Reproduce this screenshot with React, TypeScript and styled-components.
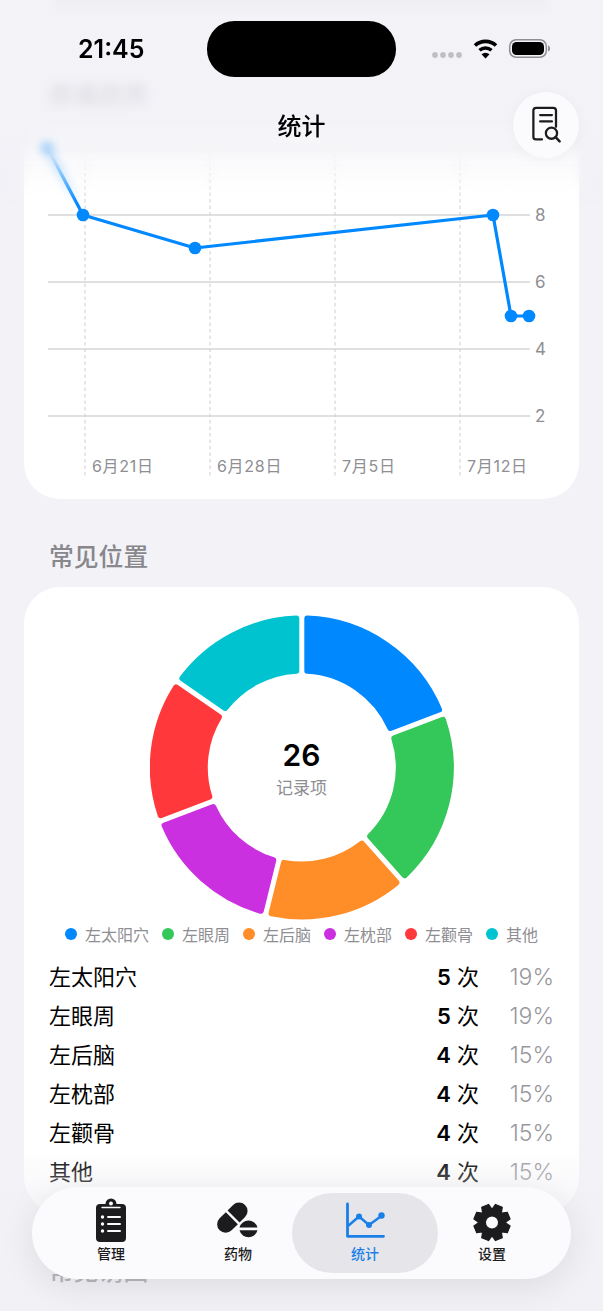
import React from "react";
import styled, { createGlobalStyle } from "styled-components";

const Global = createGlobalStyle`
  html, body { margin: 0; padding: 0; background: #f2f2f7; }
  body { font-family: Inter, "Noto Sans CJK SC", "Liberation Sans", sans-serif; color: #000; }
`;

const Screen = styled.div`
  position: relative;
  width: 603px;
  height: 1311px;
  overflow: hidden;
  background: #f2f2f7;
`;

const Scroll = styled.main`
  display: flex;
  flex-direction: column;
  padding: 0 24px;
`;

const Sliver = styled.div`
  height: 9px;
  margin: 0 31px 69px;
  background: #dcdce0;
`;

const SectionTitle = styled.h2`
  margin: 0 0 13px 25px;
  height: 34px;
  line-height: 34px;
  font-size: 24.8px;
  font-weight: 500;
  color: #87878c;
`;

const Card = styled.section<{ $after?: number }>`
  background: #fff;
  border-radius: 36px;
  margin-bottom: ${(p) => p.$after ?? 41}px;
`;

const ChartSvg = styled.svg`
  display: block;
  width: 555px;
  height: 374px;
`;

const AxisText = styled.text`
  font-family: Inter, "Noto Sans CJK SC", sans-serif;
  font-size: 16px;
  fill: #8e8e93;
  letter-spacing: 0.7px;
`;

const DonutCard = styled(Card)`
  padding-top: 28px;
  height: 626px;
  box-sizing: border-box;
`;

const DonutWrap = styled.div`
  position: relative;
  width: 304px;
  height: 305px;
  margin: 0 auto;
`;

const DonutCenter = styled.div`
  position: absolute;
  inset: 0;
  display: flex;
  flex-direction: column;
  align-items: center;
  justify-content: center;
  padding-top: 2px;
  box-sizing: border-box;
`;

const Total = styled.div`
  font-size: 30px;
  line-height: 36px;
  font-weight: 600;
`;

const TotalLabel = styled.div`
  margin-top: 3px;
  font-size: 17px;
  line-height: 24px;
  color: #8e8e93;
`;

const Legend = styled.div`
  display: flex;
  justify-content: center;
  gap: 13px;
  margin-top: 4px;
  height: 20px;
`;

const LegendItem = styled.div`
  display: flex;
  align-items: center;
  gap: 8px;
  font-size: 16px;
  color: #8e8e93;
  white-space: nowrap;
`;

const Dot = styled.span<{ $color: string }>`
  width: 12px;
  height: 12px;
  border-radius: 50%;
  background: ${(p) => p.$color};
`;

const Rows = styled.div`
  margin-top: 14px;
  padding: 0 25px;
`;

const Row = styled.div`
  display: flex;
  align-items: baseline;
  height: 39px;
  line-height: 39px;
  font-size: 22px;
`;

const RowName = styled.span`
  flex: 1;
`;

const RowCount = styled.span`
  font-weight: 400;
  b {
    font-weight: 600;
  }
`;

const RowShare = styled.span`
  width: 75px;
  text-align: right;
  font-size: 23px;
  color: #98989d;
  font-weight: 300;
`;

const Header = styled.header`
  position: absolute;
  top: 0;
  left: 0;
  right: 0;
  height: 210px;
`;

const HeaderGlass = styled.div`
  position: absolute;
  inset: 0;
  background: linear-gradient(
    rgba(242, 242, 247, 0.82) 0,
    rgba(242, 242, 247, 0.82) 128px,
    rgba(242, 242, 247, 0.6) 150px,
    rgba(242, 242, 247, 0) 205px
  );
  backdrop-filter: blur(5px);
  mask-image: linear-gradient(#000 0, #000 150px, transparent 205px);
`;

const StatusRow = styled.div`
  position: relative;
  display: grid;
  grid-template-columns: 207px 189px 1fr;
  padding-top: 21px;
  height: 55px;
`;

const Clock = styled.div`
  padding-left: 78px;
  font-size: 25px;
  line-height: 56px;
  font-weight: 600;
`;

const Island = styled.div`
  background: #000;
  border-radius: 27.5px;
`;

const StatusIcons = styled.div`
  padding: 17px 0 0 36px;
`;

const NavRow = styled.div`
  position: relative;
  display: grid;
  grid-template-columns: 1fr auto 1fr;
  align-items: center;
  margin-top: 16px;
  padding: 0 24px;
`;

const NavTitle = styled.h1`
  grid-column: 2;
  margin: 4px 0 0;
  font-size: 24px;
  line-height: 32px;
  font-weight: 500;
`;

const RoundButton = styled.button`
  grid-column: 3;
  justify-self: end;
  display: flex;
  align-items: center;
  justify-content: center;
  width: 66px;
  height: 66px;
  padding: 0;
  border: 0;
  border-radius: 50%;
  background: #fbfbfd;
  box-shadow: 0 2px 14px rgba(0, 0, 0, 0.04);
`;

const BottomFade = styled.div`
  position: absolute;
  left: 0;
  right: 0;
  bottom: 0;
  height: 165px;
  background: linear-gradient(rgba(240, 240, 245, 0) 0, rgba(240, 240, 245, 0.45) 50px);
`;

const TabBar = styled.nav`
  position: absolute;
  left: 32px;
  top: 1187px;
  width: 539px;
  height: 92px;
  box-sizing: border-box;
  padding: 0 15.5px;
  display: flex;
  border-radius: 46px;
  background: #fbfbfd;
  box-shadow: 0 8px 36px rgba(0, 0, 0, 0.09);
`;

const Tab = styled.div<{ $active?: boolean }>`
  position: relative;
  width: 127px;
  display: flex;
  flex-direction: column;
  align-items: center;
  padding-top: 11px;
  font-size: 14px;
  line-height: 18px;
  font-weight: 500;
  color: ${(p) => (p.$active ? "#1a80e8" : "#1c1c1e")};
  &::before {
    content: "";
    display: ${(p) => (p.$active ? "block" : "none")};
    position: absolute;
    top: 6px;
    bottom: 6px;
    left: -10px;
    right: -9px;
    border-radius: 40px;
    background: #e6e6ea;
  }
`;

const TabIcon = styled.svg`
  position: relative;
  display: block;
  width: 46px;
  height: 46px;
  margin-bottom: 1px;
`;

const TabLabel = styled.span`
  position: relative;
`;

const BLUE = "#0088ff";

const segments = [
  { name: "左太阳穴", count: 5, share: "19%", color: BLUE },
  { name: "左眼周", count: 5, share: "19%", color: "#34c759" },
  { name: "左后脑", count: 4, share: "15%", color: "#ff8d28" },
  { name: "左枕部", count: 4, share: "15%", color: "#cb30e0" },
  { name: "左颧骨", count: 4, share: "15%", color: "#ff383c" },
  { name: "其他", count: 4, share: "15%", color: "#00c3d0" },
];

// Ring sector path, inset so a round-joined stroke of 2r restores the outline with soft corners.
function sector(a0: number, a1: number, R: number, Ri: number, gap: number, r: number) {
  const ro = R - r;
  const ri = Ri + r;
  const off = gap / 2 + r;
  const dO = Math.asin(off / ro);
  const dI = Math.asin(off / ri);
  const pt = (a: number, p: number) => `${(p * Math.sin(a)).toFixed(2)} ${(-p * Math.cos(a)).toFixed(2)}`;
  return [
    `M${pt(a0 + dO, ro)}`,
    `A${ro} ${ro} 0 0 1 ${pt(a1 - dO, ro)}`,
    `L${pt(a1 - dI, ri)}`,
    `A${ri} ${ri} 0 0 0 ${pt(a0 + dI, ri)}`,
    "Z",
  ].join(" ");
}

function Donut() {
  const total = segments.reduce((s, x) => s + x.count, 0);
  let at = 0;
  return (
    <svg width="304" height="305" viewBox="-151.8 -152.5 304 305" style={{ display: "block" }}>
      {segments.map((s) => {
        const a0 = (at / total) * Math.PI * 2;
        at += s.count;
        const a1 = (at / total) * Math.PI * 2;
        return (
          <path
            key={s.name}
            d={sector(a0, a1, 152, 94, 5, 3)}
            fill={s.color}
            stroke={s.color}
            strokeWidth={6}
            strokeLinejoin="round"
          />
        );
      })}
    </svg>
  );
}

const gridRows = [
  { y: 147.5, label: "" },
  { y: 215, label: "8" },
  { y: 282, label: "6" },
  { y: 349, label: "4" },
  { y: 416, label: "2" },
];
const ticks = [
  { x: 85, label: "6月21日" },
  { x: 210, label: "6月28日" },
  { x: 335, label: "7月5日" },
  { x: 460, label: "7月12日" },
];
const points = [
  [47, 147],
  [83, 215],
  [195, 248],
  [493, 215],
  [511, 316],
  [529, 316],
];

function TrendChart() {
  return (
    <ChartSvg viewBox="24 125 555 374">
      {gridRows.map((g) => (
        <g key={g.y}>
          <line x1="48" x2="530" y1={g.y} y2={g.y} stroke="#d6d6d9" strokeWidth="1.3" />
          {g.label && (
            <AxisText x="535" y={g.y + 6} style={{ fontSize: 17 }}>
              {g.label}
            </AxisText>
          )}
        </g>
      ))}
      {ticks.map((t) => (
        <g key={t.x}>
          <line x1={t.x} x2={t.x} y1="147" y2="476" stroke="#d2d2d6" strokeWidth="1.1" strokeDasharray="3.5 3" />
          <AxisText x={t.x + 7} y="472">
            {t.label}
          </AxisText>
        </g>
      ))}
      <polyline
        points={points.map((p) => p.join(",")).join(" ")}
        fill="none"
        stroke={BLUE}
        strokeWidth="3.2"
        strokeLinejoin="round"
      />
      {points.map((p) => (
        <circle key={p[0]} cx={p[0]} cy={p[1]} r="6.3" fill={BLUE} />
      ))}
    </ChartSvg>
  );
}

function WifiGlyph() {
  return (
    <svg width="118" height="22" viewBox="432 38 118 22" style={{ display: "block" }}>
      {[435, 443, 451, 459].map((x) => (
        <circle key={x} cx={x} cy="55" r="2.9" fill="#c0c0c5" />
      ))}
      <path d="M475 45.5a15.5 15.5 0 0 1 21 0" fill="none" stroke="#000" strokeWidth="3.6" />
      <path d="M479.5 50.3a9 9 0 0 1 12 0" fill="none" stroke="#000" strokeWidth="3.4" />
      <path d="M485.5 58.5l-4-4.2a6 6 0 0 1 8 0z" fill="#000" />
      <rect x="509.7" y="39.7" width="36.6" height="17.6" rx="6.5" fill="none" stroke="#8e8e93" strokeWidth="1.5" />
      <rect x="512" y="42" width="32" height="13" rx="4.6" fill="#000" />
      <path d="M548 45.5c1.6.5 2 1.5 2 3s-.4 2.500-2 3z" fill="#8e8e93" />
    </svg>
  );
}

function RecordSearchIcon() {
  return (
    <svg width="31" height="38" viewBox="0 0 34 42" fill="none" stroke="#1c1c1e" strokeWidth="2.5" strokeLinecap="round">
      <path d="M12 37H5.500a3 3 0 0 1-3-3V5a3 3 0 0 1 3-3h19a3 3 0 0 1 3 3v18" />
      <path d="M10 10h13M10 17h13" />
      <circle cx="22.500" cy="30" r="6.200" />
      <path d="M27 34.500l4.500 4.500" strokeWidth="2.800" />
    </svg>
  );
}

function ClipboardIcon() {
  return (
    <TabIcon viewBox="0 0 46 46">
      <path
        d="M12 6h5.500a5.500 5.500 0 0 1 11 0H34a4 4 0 0 1 4 4v30a4 4 0 0 1-4 4H12a4 4 0 0 1-4-4V10a4 4 0 0 1 4-4z"
        fill="#1c1c1e"
      />
      <circle cx="23" cy="5.500" r="2" fill="#fbfbfd" />
      <path d="M14 9.500h18" stroke="#fbfbfd" strokeWidth="1.400" strokeLinecap="round" />
      {[19, 26, 33].map((y) => (
        <g key={y}>
          <circle cx="14.500" cy={y} r="1.700" fill="#fbfbfd" />
          <rect x="19" y={y - 1.1} width="14" height="2.200" rx="1.100" fill="#fbfbfd" />
        </g>
      ))}
    </TabIcon>
  );
}

function PillsIcon() {
  return (
    <TabIcon viewBox="0 0 46 46">
      <g transform="rotate(-45 17 20)">
        <path d="M8 11.500h8.800v17H8a8.500 8.500 0 0 1 0-17z" fill="#1c1c1e" />
        <path d="M19.200 11.500H27a8.500 8.500 0 0 1 0 17h-7.800z" fill="#1c1c1e" />
      </g>
      <path d="M24.500 29.500a9.300 9.300 0 0 1 18 0z" fill="#1c1c1e" />
      <path d="M24.500 32.300h18a9.300 9.300 0 0 1-18 0z" fill="#1c1c1e" />
    </TabIcon>
  );
}

function TrendIcon() {
  return (
    <TabIcon viewBox="0 0 46 46" fill="none" stroke="#1a80e8">
      <path d="M5.500 6v32.300h36" strokeWidth="2.800" strokeLinecap="round" strokeLinejoin="round" />
      <path d="M6 28L17 18.500 27 27 40 17.500" strokeWidth="2.400" strokeLinejoin="round" />
      <circle cx="17" cy="18.500" r="3" fill="#1a80e8" stroke="none" />
      <circle cx="27" cy="27" r="3" fill="#1a80e8" stroke="none" />
      <circle cx="39.500" cy="17.500" r="3.200" fill="#1a80e8" stroke="none" />
    </TabIcon>
  );
}

// Eight-toothed cog outline with an even-odd hole in the middle.
function cogPath(cx: number, cy: number) {
  const outer = 18.4;
  const root = 13.8;
  const pts: string[] = [];
  for (let i = 0; i < 8; i++) {
    const c = ((i * 45 + 22.5) * Math.PI) / 180;
    const seq: [number, number][] = [
      [root, c - 0.36],
      [outer, c - 0.2],
      [outer, c + 0.2],
      [root, c + 0.36],
    ];
    seq.forEach(([r, a]) => pts.push(`${(cx + r * Math.cos(a)).toFixed(2)} ${(cy + r * Math.sin(a)).toFixed(2)}`));
  }
  const h = 6.6;
  return `M${pts.join("L")}Z M${cx - h} ${cy}a${h} ${h} 0 1 0 ${h * 2} 0a${h} ${h} 0 1 0 ${-h * 2} 0z`;
}

function CogIcon() {
  return (
    <TabIcon viewBox="0 0 46 46">
      <path d={cogPath(23, 24.500)} fill="#1c1c1e" fillRule="evenodd" stroke="#1c1c1e" strokeWidth="1.200" strokeLinejoin="round" />
    </TabIcon>
  );
}

export default function App() {
  return (
    <Screen>
      <Global />
      <Scroll>
        <Sliver />
        <SectionTitle>疼痛趋势</SectionTitle>
        <Card>
          <TrendChart />
        </Card>
        <SectionTitle>常见位置</SectionTitle>
        <DonutCard $after={41}>
          <DonutWrap>
            <Donut />
            <DonutCenter>
              <Total>26</Total>
              <TotalLabel>记录项</TotalLabel>
            </DonutCenter>
          </DonutWrap>
          <Legend>
            {segments.map((s) => (
              <LegendItem key={s.name}>
                <Dot $color={s.color} />
                {s.name}
              </LegendItem>
            ))}
          </Legend>
          <Rows>
            {segments.map((s) => (
              <Row key={s.name}>
                <RowName>{s.name}</RowName>
                <RowCount>
                  <b>{s.count}</b> 次
                </RowCount>
                <RowShare>{s.share}</RowShare>
              </Row>
            ))}
          </Rows>
        </DonutCard>
        <SectionTitle>常见诱因</SectionTitle>
      </Scroll>

      <Header>
        <HeaderGlass />
        <StatusRow>
          <Clock>21:45</Clock>
          <Island />
          <StatusIcons>
            <WifiGlyph />
          </StatusIcons>
        </StatusRow>
        <NavRow>
          <NavTitle>统计</NavTitle>
          <RoundButton aria-label="记录检索">
            <RecordSearchIcon />
          </RoundButton>
        </NavRow>
      </Header>

      <BottomFade />
      <TabBar>
        <Tab>
          <ClipboardIcon />
          <TabLabel>管理</TabLabel>
        </Tab>
        <Tab>
          <PillsIcon />
          <TabLabel>药物</TabLabel>
        </Tab>
        <Tab $active>
          <TrendIcon />
          <TabLabel>统计</TabLabel>
        </Tab>
        <Tab>
          <CogIcon />
          <TabLabel>设置</TabLabel>
        </Tab>
      </TabBar>
    </Screen>
  );
}
